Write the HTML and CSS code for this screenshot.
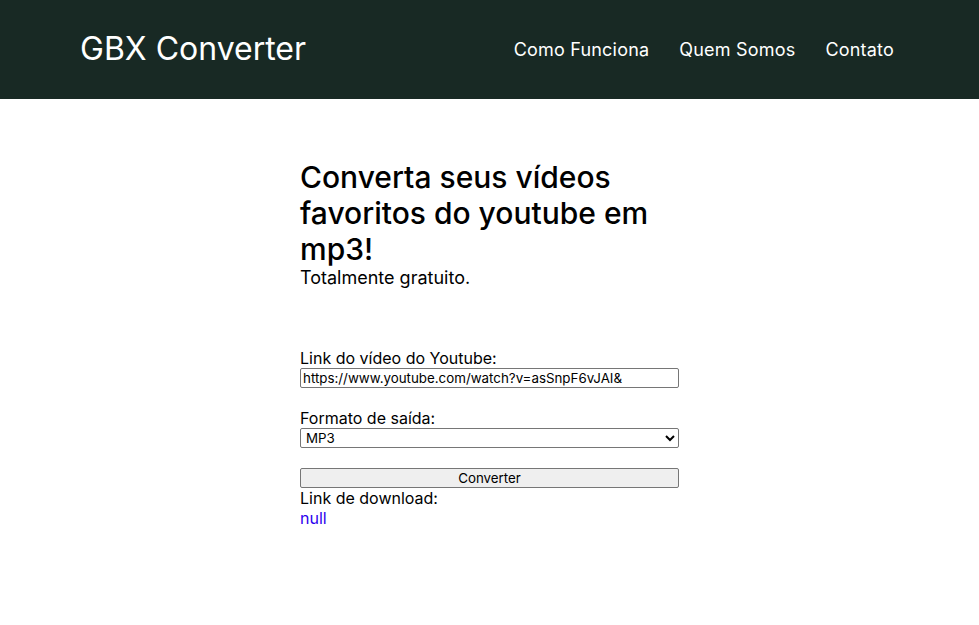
FILE: index.html
```html
<!DOCTYPE html>
<html lang="pt">
<head>
<meta charset="utf-8">
<title>GBX Converter</title>
<link rel="stylesheet" href="styles.css">
</head>
<body>
<header class="topbar">
  <div class="brand">GBX Converter</div>
  <nav class="nav">
    <a href="#">Como Funciona</a>
    <a href="#">Quem Somos</a>
    <a href="#">Contato</a>
  </nav>
</header>
<main class="main">
  <section class="hero">
    <h1>Converta seus vídeos favoritos do youtube em mp3!</h1>
    <p class="sub">Totalmente gratuito.</p>
  </section>
  <form class="form">
    <label class="field">
      <span>Link do vídeo do Youtube:</span>
      <input type="text" value="https://www.youtube.com/watch?v=asSnpF6vJAI&amp;">
    </label>
    <label class="field">
      <span>Formato de saída:</span>
      <select><option>MP3</option></select>
    </label>
    <button type="button" class="btn">Converter</button>
    <div class="result">
      <span>Link de download:</span>
      <a href="#">null</a>
    </div>
  </form>
</main>
</body>
</html>
```
FILE: styles.css
```css
* { box-sizing: border-box; }
body {
  margin: 0;
  font-family: Inter, "Noto Sans", sans-serif;
  background: #fff;
  color: #000;
}
.topbar {
  height: 99px;
  background: #182924;
  display: flex;
  align-items: center;
  justify-content: space-between;
  padding: 0 85px 0 80px;
}
.brand {
  color: #fff;
  font-size: 32px;
  font-weight: 400;
  padding-bottom: 2px;
}
.nav {
  display: flex;
  gap: 30px;
}
.nav a {
  color: #fff;
  text-decoration: none;
  font-size: 18px;
  letter-spacing: 0.2px;
}
.main {
  width: 379px;
  margin: 0 auto;
  padding-top: 60px;
}
.hero h1 {
  margin: 0;
  font-size: 30px;
  font-weight: 500;
  line-height: 36px;
}
.sub {
  margin: 0;
  font-size: 18px;
  line-height: 22px;
}
.form {
  margin-top: 59px;
  display: flex;
  flex-direction: column;
}
.field {
  display: flex;
  flex-direction: column;
  font-size: 16px;
  margin-bottom: 20px;
}
.field span { line-height: 20px; }
.field input, .field select {
  width: 100%;
  height: 20px;
  border: 1px solid #767676;
  border-radius: 2px;
  font-family: Inter, sans-serif;
  font-size: 13.33px;
  padding: 0 2px;
  margin: 0;
  background: #fff;
  color: #000;
}
.field select { padding: 0 1px; }
.btn {
  height: 20px;
  border: 1px solid #767676;
  border-radius: 2px;
  background: #efefef;
  font-family: Inter, sans-serif;
  font-size: 13.33px;
  padding: 0;
  margin: 0;
}
.result {
  display: flex;
  flex-direction: column;
  font-size: 16px;
  line-height: 20px;
}
.result a {
  color: #2b00ee;
  text-decoration: none;
}
```
